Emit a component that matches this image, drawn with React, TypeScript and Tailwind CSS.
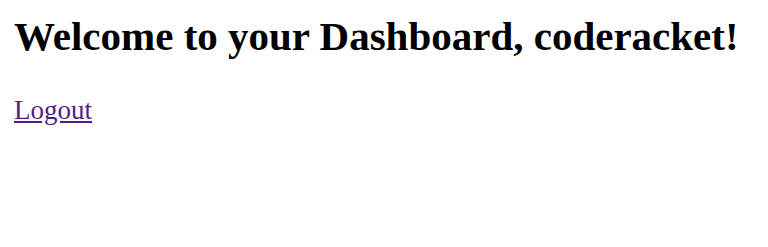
export default function App() {
  return (
    <div className="min-h-[247px] bg-white px-[14px] pt-[13px] font-['Liberation_Serif',serif] text-black">
      <h1 className="text-[41px] font-bold leading-[47px]">Welcome to your Dashboard, coderacket!</h1>
      <p className="mt-[35px] text-[27px] leading-[31px]">
        <a href="#" className="text-[#551a8b] underline">
          Logout
        </a>
      </p>
    </div>
  )
}
